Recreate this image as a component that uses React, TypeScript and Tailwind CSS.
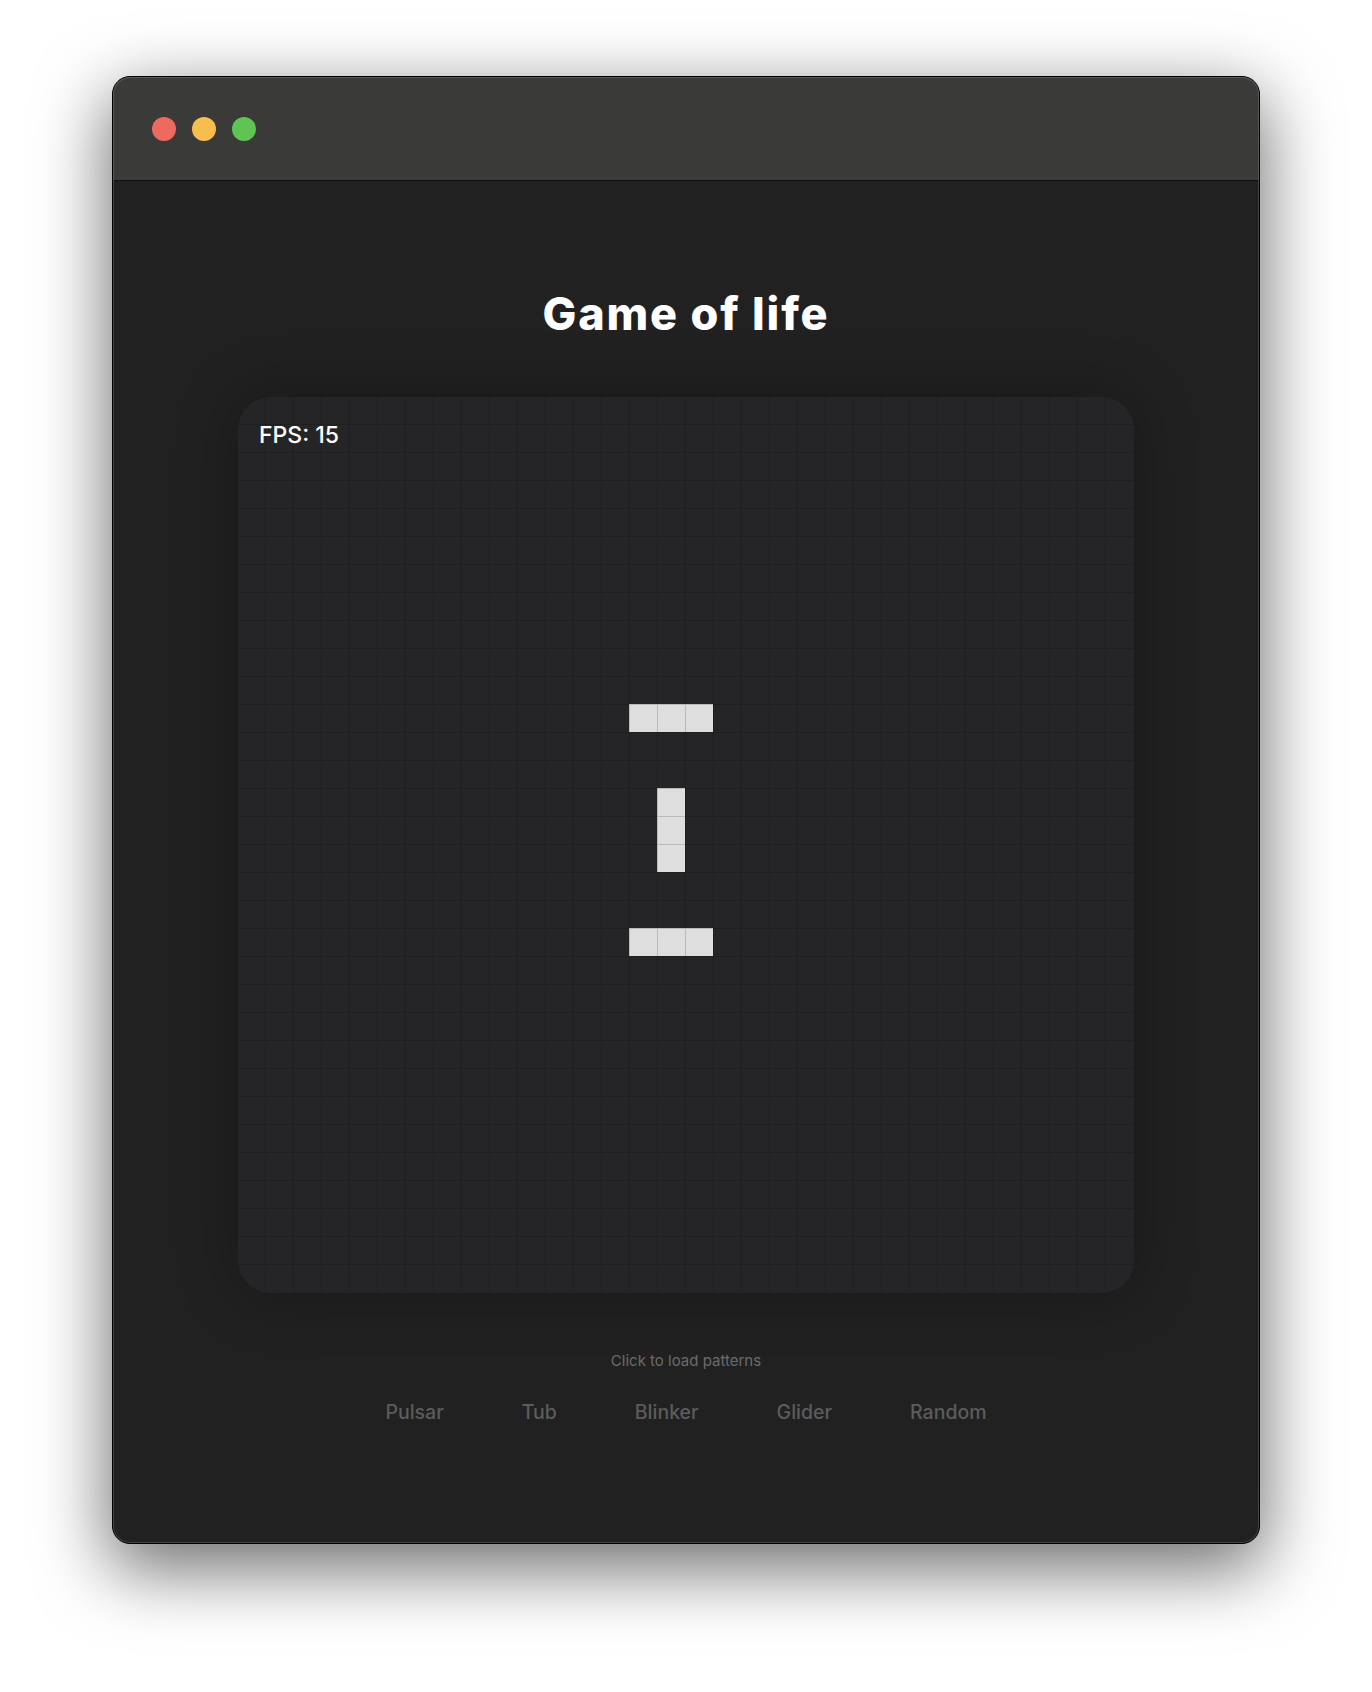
import React from "react";

const SIZE = 32;
const ALIVE = new Set<string>([
  "11-14", "11-15", "11-16",
  "14-15", "15-15", "16-15",
  "19-14", "19-15", "19-16",
]);

function Grid() {
  const cells = [];
  for (let r = 0; r < SIZE; r++) {
    for (let c = 0; c < SIZE; c++) {
      const alive = ALIVE.has(`${r}-${c}`);
      cells.push(
        <div
          key={`${r}-${c}`}
          className={
            "border-l border-t border-[rgba(0,0,0,0.16)] " +
            (alive ? "bg-[#dedede]" : "")
          }
        />
      );
    }
  }
  return (
    <div className="relative w-[896px] h-[896px] rounded-[32px] overflow-hidden bg-[#252527] shadow-[0_0_60px_rgba(0,0,0,0.28)]">
      <div className="grid grid-cols-[repeat(32,28px)] grid-rows-[repeat(32,28px)] -ml-px -mt-px">
        {cells}
      </div>
      <div className="absolute left-[21px] top-[24px] text-[23px] leading-[28px] font-medium text-white">
        FPS: 15
      </div>
    </div>
  );
}

export default function App() {
  const patterns = ["Pulsar", "Tub", "Blinker", "Glider", "Random"];
  return (
    <div
      className="w-[1372px] h-[1692px] bg-white pl-[112px] pt-[76px]"
      style={{ fontFamily: "Inter, 'Noto Sans', sans-serif" }}
    >
      <div className="relative w-[1148px] h-[1468px] rounded-[18px] overflow-hidden bg-[#212121] border border-black shadow-[0_22px_70px_4px_rgba(0,0,0,0.56)] flex flex-col">
        <div className="h-[104px] bg-[#3a3a39] border-b border-[#111] flex items-center gap-[16px] pl-[39px] shrink-0">
          <div className="w-[24px] h-[24px] rounded-full bg-[#ee6a5f]" />
          <div className="w-[24px] h-[24px] rounded-full bg-[#f5be4f]" />
          <div className="w-[24px] h-[24px] rounded-full bg-[#5ec454]" />
        </div>
        <div className="flex flex-col items-center">
          <h1 className="mt-[111px] text-[45px] leading-[44px] font-extrabold tracking-[1.8px] text-white">
            Game of life
          </h1>
          <div className="mt-[61px]">
            <Grid />
          </div>
          <p className="mt-[58px] text-[15px] leading-[20px] text-[#6b6b6b]">
            Click to load patterns
          </p>
          <div className="mt-[27px] flex gap-[78px]">
            {patterns.map((p) => (
              <button
                key={p}
                className="text-[19.5px] leading-[28px] font-medium text-[#5c5c5c]"
              >
                {p}
              </button>
            ))}
          </div>
        </div>
        <div className="pointer-events-none absolute inset-0 rounded-[17px] shadow-[inset_0_0_0_1px_rgba(255,255,255,0.16)]" />
      </div>
    </div>
  );
}
